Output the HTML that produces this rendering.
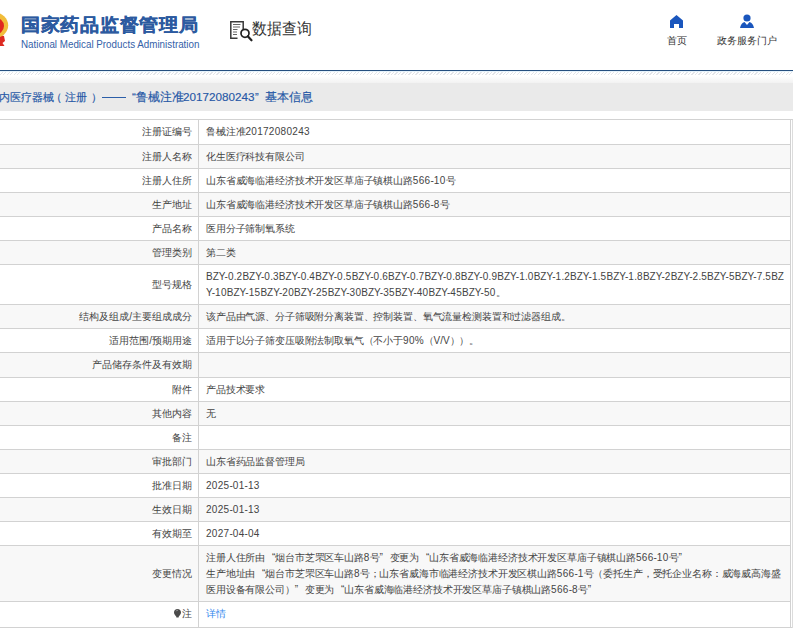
<!DOCTYPE html>
<html><head><meta charset="utf-8">
<style>
*{margin:0;padding:0;box-sizing:border-box}
html,body{width:793px;height:634px;overflow:hidden;background:#fff;font-family:"Liberation Sans",sans-serif;color:#444}
.abs{position:absolute;white-space:nowrap}
#hdr{position:absolute;left:0;top:0;width:793px;height:70px;background:#fff}
#bline{position:absolute;left:0;top:70px;width:793px;height:1px;background:#254f7f}
#bline2{position:absolute;left:0;top:71px;width:793px;height:1px;background:#e6f3fb}
#hatch{position:absolute;left:0;top:72px;width:793px;height:3px;
 background:repeating-linear-gradient(135deg,#fff 0,#fff 1.6px,#e3e5e9 1.5px,#e3e5e9 2.47px)}
#grad{position:absolute;left:0;top:76px;width:793px;height:7px;background:linear-gradient(#fff,#f2f2f2)}
#tbar{position:absolute;left:0;top:83px;width:793px;height:28px;background:#eaeaea}
#dash{position:absolute;left:102px;top:14px;width:24px;height:1px;background:#2b5ea8}
#tbar span{position:absolute;left:-1px;top:7px;font-size:11px;line-height:14px;color:#2658a6;-webkit-text-stroke:0.15px #2658a6;white-space:nowrap}
.row{position:absolute;left:0;width:791px;border-top:1px solid #d2d2d2}
.row.g{background:#f8f8f8}
.lab{position:absolute;left:0;width:198px;top:0;bottom:0;display:flex;align-items:center;justify-content:flex-end;padding-right:6px;font-size:10px;line-height:16px;color:#444;white-space:nowrap}
.val{position:absolute;left:206px;top:0;font-size:10px;letter-spacing:-0.15px;line-height:16px;padding-top:4px;color:#444;white-space:nowrap}
.val a{color:#3488ee}
.l{font-weight:normal;letter-spacing:0}.d{font-weight:normal;letter-spacing:0.3px}
.ql,.qr{font-style:normal;display:inline-block;width:1em}.ql{text-align:right}.qr{text-align:left}
#vdiv{position:absolute;left:198px;top:119px;width:1px;height:508px;background:#d2d2d2}
#rvb{position:absolute;left:790px;top:119px;width:1px;height:508px;background:#d2d2d2}
#rvb2{position:absolute;left:792px;top:119px;width:1px;height:509px;background:#dcdcdc}
#topb{position:absolute;left:0;top:119px;width:793px;height:1px;background:#d2d2d2}
#bot{position:absolute;left:0;width:793px;height:1px;background:#d2d2d2}
.pin{display:inline-block;width:6px;height:8px;background:#555;border-radius:3px 3px 3px 0;transform:rotate(-45deg);margin-right:2px;vertical-align:-1px}
</style></head><body>
<div id="hdr">
  <!-- emblem -->
  <svg class="abs" style="left:-20px;top:5px" width="30" height="45" viewBox="0 0 30 45">
    <path d="M12 28 L24 31 L25 36 L22.5 38 L24.5 41 L16 41 Z" fill="#dd2a22"/>
    <ellipse cx="14.2" cy="20.3" rx="14" ry="12.9" fill="#f1bd3a"/>
    <ellipse cx="14.2" cy="21" rx="9.8" ry="8.8" fill="#e0271f"/>
  </svg>
  <div class="abs" style="left:21px;top:13px;font-size:19.5px;line-height:24px;font-weight:bold;color:#2c5aa0;-webkit-text-stroke:0.3px #2c5aa0;transform:scale(0.985,0.93);transform-origin:0 0;">国家药品监督管理局</div>
  <div class="abs" style="left:21px;top:37.5px;font-size:10.5px;line-height:12px;color:#3461a8;transform:scaleX(0.935);transform-origin:0 0;">National Medical Products Administration</div>
  <!-- data query icon -->
  <svg class="abs" style="left:228px;top:18px" width="26" height="26" viewBox="0 0 26 26">
    <path d="M2.8 10 V3.7 H15.2 V11.5 M2.8 10 V20.3 H9.5" fill="none" stroke="#3a3a3a" stroke-width="1.5"/>
    <path d="M5 6.5 H12.5 M5 9 H12 M5 11.5 H9.5 M5 14 H9 M5 16.5 H9" stroke="#555" stroke-width="0.9"/>
    <circle cx="17" cy="15.3" r="4" fill="#fff" stroke="#222" stroke-width="1.7"/>
    <path d="M19.8 18.3 L23.5 22.3" stroke="#222" stroke-width="2.2" stroke-linecap="round"/>
  </svg>
  <div class="abs" style="left:251.5px;top:17.5px;font-size:16px;line-height:22px;color:#333;transform:scaleX(0.93);transform-origin:0 0">数据查询</div>
  <!-- home -->
  <svg class="abs" style="left:669px;top:14px" width="15" height="15" viewBox="0 0 15 15">
    <path d="M1 6.5 L7.5 1 L14 6.5 V14 H10 V10 H5 V14 H1 Z" fill="#1a56bd"/>
  </svg>
  <div class="abs" style="left:666.5px;top:34.7px;font-size:10.3px;line-height:12px;color:#333;">首页</div>
  <svg class="abs" style="left:739px;top:13px" width="16" height="16" viewBox="0 0 16 16">
    <circle cx="8" cy="5" r="3.6" fill="#1a56bd"/>
    <path d="M1 15 Q2 10 5.5 9 L8 12 L10.5 9 Q14 10 15 15 Z" fill="#1a56bd"/>
  </svg>
  <div class="abs" style="left:717px;top:34.7px;font-size:10px;line-height:12px;color:#333;">政务服务门户</div>
</div>
<div id="bline"></div><div id="bline2"></div>
<div id="hatch"></div>
<div id="grad"></div>
<div id="tbar"><span style="left:-1px">内医疗器械</span><span style="left:50.5px">（</span><span style="left:64.5px">注册</span><span style="left:90.5px">）</span><i id="dash"></i><span style="left:132px;font-size:11.5px">“鲁械注准</span><span style="left:183px;font-size:11.7px">20172080243</span><span style="left:255px">”</span><span style="left:265px;font-size:11.5px">基本信息</span></div>

<!--ROWS--><div id="rows"><div class="row" style="top:119px;height:25px"><div class="lab">注册证编号</div><div class="val">鲁械注准<b class="l"><b class="d">20172080243</b></b></div></div>
<div class="row g" style="top:144px;height:24px"><div class="lab">注册人名称</div><div class="val">化生医疗科技有限公司</div></div>
<div class="row" style="top:168px;height:24px"><div class="lab">注册人住所</div><div class="val">山东省威海临港经济技术开发区草庙子镇棋山路<b class="l"><b class="d">566</b>-<b class="d">10</b></b>号</div></div>
<div class="row g" style="top:192px;height:24px"><div class="lab">生产地址</div><div class="val">山东省威海临港经济技术开发区草庙子镇棋山路<b class="l"><b class="d">566</b>-<b class="d">8</b></b>号</div></div>
<div class="row" style="top:216px;height:24px"><div class="lab">产品名称</div><div class="val">医用分子筛制氧系统</div></div>
<div class="row g" style="top:240px;height:24px"><div class="lab">管理类别</div><div class="val">第二类</div></div>
<div class="row" style="top:264px;height:40px"><div class="lab">型号规格</div><div class="val"><b class="l">BZY-<b class="d">0</b>.<b class="d">2</b>BZY-<b class="d">0</b>.<b class="d">3</b>BZY-<b class="d">0</b>.<b class="d">4</b>BZY-<b class="d">0</b>.<b class="d">5</b>BZY-<b class="d">0</b>.<b class="d">6</b>BZY-<b class="d">0</b>.<b class="d">7</b>BZY-<b class="d">0</b>.<b class="d">8</b>BZY-<b class="d">0</b>.<b class="d">9</b>BZY-<b class="d">1</b>.<b class="d">0</b>BZY-<b class="d">1</b>.<b class="d">2</b>BZY-<b class="d">1</b>.<b class="d">5</b>BZY-<b class="d">1</b>.<b class="d">8</b>BZY-<b class="d">2</b>BZY-<b class="d">2</b>.<b class="d">5</b>BZY-<b class="d">5</b>BZY-<b class="d">7</b>.<b class="d">5</b>BZ</b><br><b class="l">Y-<b class="d">10</b>BZY-<b class="d">15</b>BZY-<b class="d">20</b>BZY-<b class="d">25</b>BZY-<b class="d">30</b>BZY-<b class="d">35</b>BZY-<b class="d">40</b>BZY-<b class="d">45</b>BZY-<b class="d">50</b></b>。</div></div>
<div class="row g" style="top:304px;height:24px"><div class="lab">结构及组成/主要组成成分</div><div class="val">该产品由气源、分子筛吸附分离装置、控制装置、氧气流量检测装置和过滤器组成。</div></div>
<div class="row" style="top:328px;height:24px"><div class="lab">适用范围/预期用途</div><div class="val">适用于以分子筛变压吸附法制取氧气（不小于<b class="l"><b class="d">90</b>%</b>（<b class="l">V/V</b>））。</div></div>
<div class="row g" style="top:352px;height:25px"><div class="lab">产品储存条件及有效期</div><div class="val"></div></div>
<div class="row" style="top:377px;height:24px"><div class="lab">附件</div><div class="val">产品技术要求</div></div>
<div class="row g" style="top:401px;height:24px"><div class="lab">其他内容</div><div class="val">无</div></div>
<div class="row" style="top:425px;height:24px"><div class="lab">备注</div><div class="val"></div></div>
<div class="row g" style="top:449px;height:24px"><div class="lab">审批部门</div><div class="val">山东省药品监督管理局</div></div>
<div class="row" style="top:473px;height:24px"><div class="lab">批准日期</div><div class="val"><b class="l"><b class="d">2025</b>-<b class="d">01</b>-<b class="d">13</b></b></div></div>
<div class="row g" style="top:497px;height:24px"><div class="lab">生效日期</div><div class="val"><b class="l"><b class="d">2025</b>-<b class="d">01</b>-<b class="d">13</b></b></div></div>
<div class="row" style="top:521px;height:24px"><div class="lab">有效期至</div><div class="val"><b class="l"><b class="d">2027</b>-<b class="d">04</b>-<b class="d">04</b></b></div></div>
<div class="row g" style="top:545px;height:56px"><div class="lab">变更情况</div><div class="val">注册人住所由<i class="ql">“</i>烟台市芝罘区车山路<b class="l"><b class="d">8</b></b>号<i class="qr">”</i>变更为<i class="ql">“</i>山东省威海临港经济技术开发区草庙子镇棋山路<b class="l"><b class="d">566</b>-<b class="d">10</b></b>号<i class="qr">”</i><br>生产地址由<i class="ql">“</i>烟台市芝罘区车山路<b class="l"><b class="d">8</b></b>号；山东省威海市临港经济技术开发区棋山路<b class="l"><b class="d">566</b>-<b class="d">1</b></b>号（委托生产，受托企业名称：威海威高海盛<br>医用设备有限公司）<i class="qr">”</i>变更为<i class="ql">“</i>山东省威海临港经济技术开发区草庙子镇棋山路<b class="l"><b class="d">566</b>-<b class="d">8</b></b>号<i class="qr">”</i></div></div>
<div class="row" style="top:601px;height:26px"><div class="lab" style="padding-bottom:2px"><svg width="9" height="11" viewBox="0 0 9 11" style="margin-right:0.5px;margin-top:-1px"><path d="M4.5 1 C6.6 1 8 2.5 8 4.5 C8 6.3 6.5 7.4 5.8 8.6 L5.6 9.6 H3.4 L3.2 8.6 C2.5 7.4 1 6.3 1 4.5 C1 2.5 2.4 1 4.5 1 Z" fill="#4a4a4a"/><path d="M3.2 3.2 Q3.6 2.4 4.6 2.3" stroke="#ddd" stroke-width="0.7" fill="none"/></svg>注</div><div class="val"><a>详情</a></div></div>
<div id="bot" style="top:627px"></div><div id="vdiv"></div><div id="rvb"></div><div id="rvb2"></div><div id="topb"></div></div><!--/ROWS-->
</body></html>
